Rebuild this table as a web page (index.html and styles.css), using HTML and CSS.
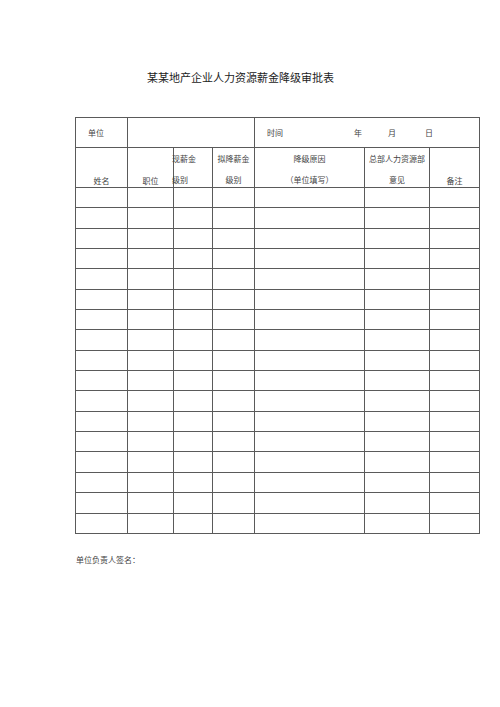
FILE: index.html
```html
<!DOCTYPE html>
<html lang="zh">
<head>
<meta charset="utf-8">
<link rel="stylesheet" href="styles.css">
</head>
<body>
<div class="page">
  <h1 class="title">某某地产企业人力资源薪金降级审批表</h1>
  <table class="form">
    <colgroup>
      <col class="c1"><col class="c2"><col class="c3"><col class="c4"><col class="c5"><col class="c6"><col class="c7">
    </colgroup>
    <tr class="r-top">
      <td class="unit">单位</td>
      <td colspan="3"></td>
      <td colspan="3" class="date">
        <span class="d-lbl">时间</span><span class="d-y">年</span><span class="d-m">月</span><span class="d-d">日</span>
      </td>
    </tr>
    <tr class="r-head">
      <td class="bottom">姓名</td>
      <td class="bottom">职位</td>
      <td class="two left"><span class="l1">现薪金</span><span class="l2">级别</span></td>
      <td class="two"><span class="l1">拟降薪金</span><span class="l2">级别</span></td>
      <td class="two"><span class="l1">降级原因</span><span class="l2">（单位填写）</span></td>
      <td class="two"><span class="l1">总部人力资源部</span><span class="l2">意见</span></td>
      <td class="bottom">备注</td>
    </tr>
    <tr class="r"><td></td><td></td><td></td><td></td><td></td><td></td><td></td></tr>
    <tr class="r"><td></td><td></td><td></td><td></td><td></td><td></td><td></td></tr>
    <tr class="r"><td></td><td></td><td></td><td></td><td></td><td></td><td></td></tr>
    <tr class="r"><td></td><td></td><td></td><td></td><td></td><td></td><td></td></tr>
    <tr class="r"><td></td><td></td><td></td><td></td><td></td><td></td><td></td></tr>
    <tr class="r"><td></td><td></td><td></td><td></td><td></td><td></td><td></td></tr>
    <tr class="r"><td></td><td></td><td></td><td></td><td></td><td></td><td></td></tr>
    <tr class="r"><td></td><td></td><td></td><td></td><td></td><td></td><td></td></tr>
    <tr class="r"><td></td><td></td><td></td><td></td><td></td><td></td><td></td></tr>
    <tr class="r"><td></td><td></td><td></td><td></td><td></td><td></td><td></td></tr>
    <tr class="r"><td></td><td></td><td></td><td></td><td></td><td></td><td></td></tr>
    <tr class="r"><td></td><td></td><td></td><td></td><td></td><td></td><td></td></tr>
    <tr class="r"><td></td><td></td><td></td><td></td><td></td><td></td><td></td></tr>
    <tr class="r"><td></td><td></td><td></td><td></td><td></td><td></td><td></td></tr>
    <tr class="r"><td></td><td></td><td></td><td></td><td></td><td></td><td></td></tr>
    <tr class="r"><td></td><td></td><td></td><td></td><td></td><td></td><td></td></tr>
    <tr class="r"><td></td><td></td><td></td><td></td><td></td><td></td><td></td></tr>
  </table>
  <p class="sign">单位负责人签名：</p>
</div>
</body>
</html>
```
FILE: styles.css
```css
html, body {
  margin: 0;
  padding: 0;
  background: #fff;
}
.page {
  width: 500px;
  height: 707px;
  font-family: "Noto Sans CJK SC", "Noto Sans", sans-serif;
  color: #444;
}
.title {
  margin: 0 0 0 147px;
  padding-top: 70px;
  font-size: 11px;
  line-height: 14px;
  font-weight: normal;
  color: #222;
  white-space: nowrap;
}
.form {
  margin: 33px 0 0 75px;
  width: 404px;
  border-collapse: collapse;
  table-layout: fixed;
  font-size: 8px;
}
.c1 { width: 52px; }
.c2 { width: 46px; }
.c3 { width: 39px; }
.c4 { width: 42px; }
.c5 { width: 110px; }
.c6 { width: 65px; }
.c7 { width: 50px; }
.form td {
  border: 1px solid #5a5a5a;
  padding: 0;
  line-height: 10px;
  text-align: center;
  white-space: nowrap;
}
.r-top { height: 30px; }
.r-top td { vertical-align: middle; }
.form td.unit { text-align: left; padding-left: 12px; }
.form td.date { text-align: left; padding-left: 12px; }
.date span { display: inline-block; }
.d-y { margin-left: 71px; }
.d-m { margin-left: 26px; }
.d-d { margin-left: 29px; }
.r-head { height: 40px; }
.form td.bottom { vertical-align: bottom; padding-bottom: 1px; }
.form td.two { vertical-align: top; }
.l1, .l2 { display: block; line-height: 10px; }
.l1 { margin-top: 6px; }
.l2 { margin-top: 11px; }
.form td.left { text-align: left; padding-left: 0; }
.form td.left .l1, .form td.left .l2 { margin-left: -2px; }
.r { height: 20.35px; }
.sign {
  margin: 21px 0 0 76px;
  font-size: 8px;
  line-height: 10px;
  color: #444;
}
```
